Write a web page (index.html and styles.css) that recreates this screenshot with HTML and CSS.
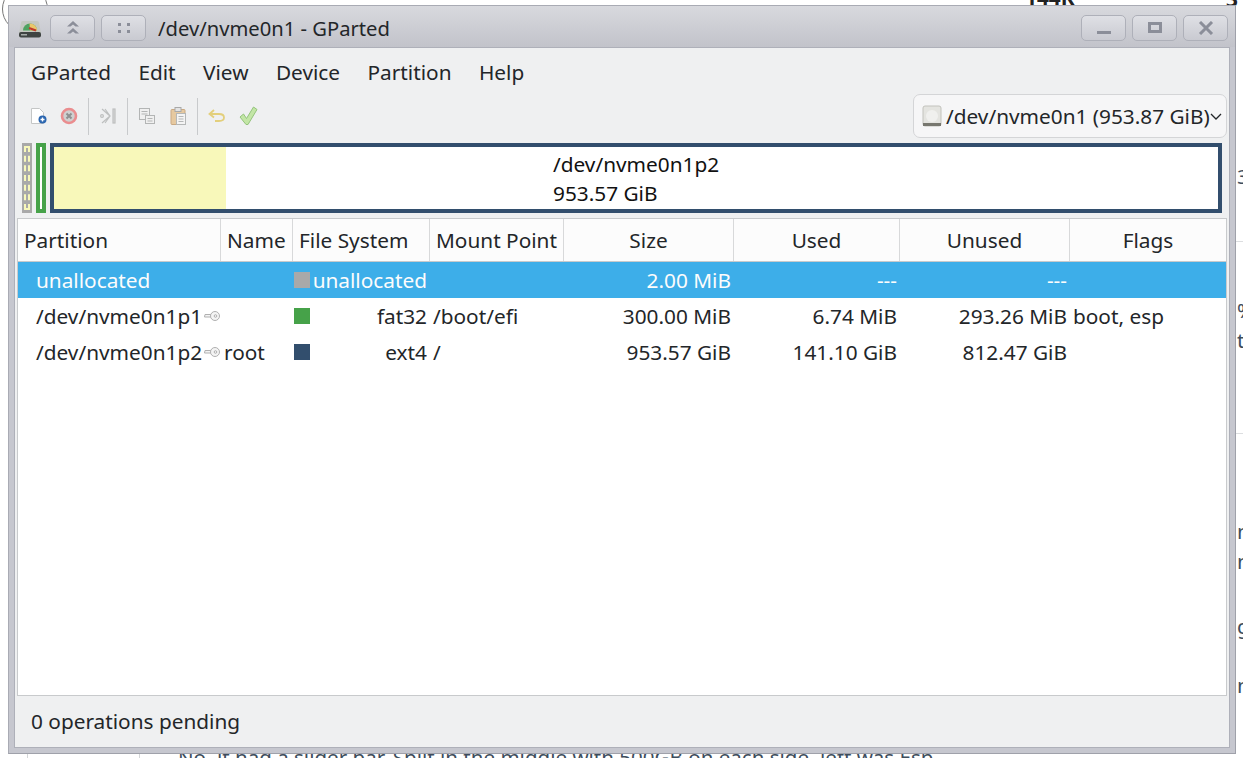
FILE: index.html
```html
<!DOCTYPE html>
<html lang="en">
<head>
  <meta charset="UTF-8">
  <title>/dev/nvme0n1 - GParted</title>
  <link rel="stylesheet" href="styles.css">
</head>
<body>
  <!-- bits of the page behind the window -->
  <div class="behind">
    <div class="behind-circle"></div>
    <i class="hair hair-a"></i>
    <i class="hair hair-b"></i>
    <i class="vert vert-a"></i>
    <i class="vert vert-b"></i>
    <span class="scrap scrap-top">144K</span>
    <span class="scrap scrap-top2">3</span>
    <span class="scrap scrap-r1">3</span>
    <span class="scrap scrap-r2">%</span>
    <span class="scrap scrap-r3">t</span>
    <span class="scrap scrap-r4">ne</span>
    <span class="scrap scrap-r5">ne</span>
    <span class="scrap scrap-r6">g</span>
    <span class="scrap scrap-r7">n</span>
    <span class="scrap scrap-bottom">No, it had a slider bar. Split in the middle with 500GB on each side, left was Esp</span>
  </div>

  <div class="window">
    <header class="titlebar">
      <svg class="app-icon" width="24" height="24" viewBox="0 0 24 24">
        <path d="M3 7q0-2 2-2h14q2 0 2 2l2 10H1z" fill="#c4c8c0"/>
        <path d="M5 14.500a7 7 0 0 1 14 0z" fill="#4fa35f"/>
        <path d="M11.500 7.500a7 7 0 0 1 7.500 7h-7z" fill="#eac76a"/>
        <path d="M11 12l7 2.500" stroke="#c0392b" stroke-width="2"/>
        <rect x="1" y="16" width="22" height="5.500" rx="2" fill="#3f4442"/>
        <rect x="3" y="18" width="6" height="1.500" fill="#a4aaa7"/>
      </svg>
      <button class="tb-btn tb-wide">
        <svg width="14" height="14" viewBox="0 0 14 14" fill="#8b8e99"><path d="M7 0l6 5.500H9.500L7 3.500 4.500 5.500H1zM7 7l6 5.500H9.500L7 10.500 4.500 12.500H1z"/></svg>
      </button>
      <button class="tb-btn tb-wide">
        <svg width="14" height="14" viewBox="0 0 14 14" fill="#8b8e99"><rect x="1" y="2" width="3" height="3"/><rect x="10" y="2" width="3" height="3"/><rect x="1" y="9" width="3" height="3"/><rect x="10" y="9" width="3" height="3"/></svg>
      </button>
      <h1 class="title">/dev/nvme0n1 - GParted</h1>
      <div class="win-controls">
        <button class="tb-btn">
          <svg width="16" height="14" viewBox="0 0 16 14"><rect x="1" y="10" width="14" height="3" fill="#8b8e99"/></svg>
        </button>
        <button class="tb-btn">
          <svg width="16" height="14" viewBox="0 0 16 14" fill="none" stroke="#8b8e99" stroke-width="3"><rect x="2.500" y="2.500" width="11" height="8"/></svg>
        </button>
        <button class="tb-btn">
          <svg width="16" height="14" viewBox="0 0 16 14" fill="none" stroke="#8b8e99" stroke-width="3"><path d="M2 1l12 12M14 1L2 13"/></svg>
        </button>
      </div>
    </header>

    <div class="client">
      <nav class="menubar">
        <span>GParted</span>
        <span>Edit</span>
        <span>View</span>
        <span>Device</span>
        <span>Partition</span>
        <span>Help</span>
      </nav>

      <div class="toolbar">
        <div class="tools">
          <svg class="tool" width="20" height="20" viewBox="0 0 20 20">
            <path d="M3.500 2.500h8l4 4v11h-12z" fill="#fff" stroke="#c4c6c6"/>
            <circle cx="14.500" cy="13.500" r="4" fill="#2b66b0"/>
            <path d="M12.500 13.500h4M14.500 11.500v4" stroke="#fff" stroke-width="1.400"/>
          </svg>
          <svg class="tool" width="20" height="20" viewBox="0 0 20 20">
            <circle cx="10" cy="10" r="7" fill="#cfd0d0" stroke="#ea8d8f" stroke-width="2.600"/>
            <path d="M7.500 7.500l5 5M12.500 7.500l-5 5" stroke="#8d8f90" stroke-width="2"/>
          </svg>
          <i class="tool-sep"></i>
          <svg class="tool" width="20" height="20" viewBox="0 0 20 20" fill="none" stroke="#bdbfbf" stroke-width="1.200">
            <path d="M4 3l8 7-8 7M7 3l5 7-5 7"/>
            <rect x="15" y="3" width="2" height="14" fill="#dcdddd"/>
            <circle cx="4" cy="10" r="1.400"/>
          </svg>
          <i class="tool-sep"></i>
          <svg class="tool" width="20" height="20" viewBox="0 0 20 20" fill="#f0f0f0" stroke="#b3b5b5">
            <rect x="2.500" y="2.500" width="10" height="11"/>
            <rect x="8.500" y="9.500" width="9" height="8"/>
            <path d="M4.500 5.500h6M4.500 8h6M10.500 12.500h5M10.500 15h5" fill="none"/>
          </svg>
          <svg class="tool" width="20" height="20" viewBox="0 0 20 20">
            <rect x="3" y="3.500" width="14" height="15" rx="1" fill="#e6c9a0" stroke="#c9a983"/>
            <rect x="7" y="1.500" width="6" height="4" fill="#e3e3e3" stroke="#a9a9a9"/>
            <rect x="8.500" y="7.500" width="9" height="11" fill="#f4f4f4" stroke="#b5b7b7"/>
            <path d="M10.500 10.500h5M10.500 13h5M10.500 15.500h5" stroke="#b5b7b7"/>
          </svg>
          <i class="tool-sep"></i>
          <svg class="tool" width="20" height="20" viewBox="0 0 20 20" fill="none" stroke="#e3cf7c" stroke-width="1.800">
            <path d="M7 4L2.500 8 7 11.500M3 8h9q5 0 5 3.500T12 15H8"/>
          </svg>
          <svg class="tool" width="20" height="20" viewBox="0 0 20 20">
            <path d="M2 11l3.500-3 3 4.500L15.500 1 19 3.500l-9 15h-2z" fill="#c3e6a6" stroke="#94c47c"/>
          </svg>
        </div>
        <div class="device-combo">
          <svg width="20" height="22" viewBox="0 0 20 22">
            <rect x="1" y="1" width="18" height="20" rx="2" fill="#e4e4e0" stroke="#c2c2bc"/>
            <circle cx="10" cy="11" r="6" fill="#f0f0ee"/>
            <rect x="1" y="18" width="18" height="3" fill="#77776f"/>
          </svg>
          <span>/dev/nvme0n1 (953.87 GiB)</span>
          <svg class="combo-arrow" width="14" height="14" viewBox="0 0 14 14" fill="none" stroke="#232629" stroke-width="1.300"><path d="M2 5l5 5 5-5"/></svg>
        </div>
      </div>

      <div class="disk-map">
        <div class="map-part map-unalloc"><i></i></div>
        <div class="map-part map-fat"><i></i></div>
        <div class="map-part map-root">
          <div class="map-used"></div>
          <div class="map-label">/dev/nvme0n1p2<br>953.57 GiB</div>
        </div>
      </div>

      <section class="table">
        <div class="row head">
          <div class="cell">Partition</div>
          <div class="cell">Name</div>
          <div class="cell">File System</div>
          <div class="cell">Mount Point</div>
          <div class="cell mid">Size</div>
          <div class="cell mid">Used</div>
          <div class="cell mid">Unused</div>
          <div class="cell mid">Flags</div>
        </div>
        <div class="row selected">
          <div class="cell part">unallocated</div>
          <div class="cell name"></div>
          <div class="cell fs"><i class="swatch sw-gray"></i><span>unallocated</span></div>
          <div class="cell mount"></div>
          <div class="cell num">2.00 MiB</div>
          <div class="cell num">---</div>
          <div class="cell num">---</div>
          <div class="cell flags"></div>
        </div>
        <div class="row">
          <div class="cell part">/dev/nvme0n1p1
            <svg class="key" width="17" height="12" viewBox="0 0 17 12" fill="#f4f4f4" stroke="#b0b0b0"><path d="M7 4.500H1L.5 7H7"/><circle cx="11" cy="6" r="4.500"/><circle cx="11.500" cy="6" r="1.300"/></svg>
          </div>
          <div class="cell name"></div>
          <div class="cell fs"><i class="swatch sw-green"></i><span>fat32</span></div>
          <div class="cell mount">/boot/efi</div>
          <div class="cell num">300.00 MiB</div>
          <div class="cell num">6.74 MiB</div>
          <div class="cell num">293.26 MiB</div>
          <div class="cell flags">boot, esp</div>
        </div>
        <div class="row">
          <div class="cell part">/dev/nvme0n1p2
            <svg class="key" width="17" height="12" viewBox="0 0 17 12" fill="#f4f4f4" stroke="#b0b0b0"><path d="M7 4.500H1L.5 7H7"/><circle cx="11" cy="6" r="4.500"/><circle cx="11.500" cy="6" r="1.300"/></svg>
          </div>
          <div class="cell name">root</div>
          <div class="cell fs"><i class="swatch sw-navy"></i><span>ext4</span></div>
          <div class="cell mount">/</div>
          <div class="cell num">953.57 GiB</div>
          <div class="cell num">141.10 GiB</div>
          <div class="cell num">812.47 GiB</div>
          <div class="cell flags"></div>
        </div>
      </section>

      <footer class="statusbar">0 operations pending</footer>
    </div>
  </div>
</body>
</html>
```

FILE: styles.css
```css
* { box-sizing:border-box; }
html, body { height:100%; }
body { margin:0; padding:5px 0 0 8px; background:#fff; font-family:"Noto Sans", sans-serif; font-size:20.8px; color:#232629; overflow:hidden; position:relative; }

/* page behind the window */
.behind { position:absolute; inset:0; overflow:hidden; }
.behind-circle { position:absolute; left:2px; top:-14px; width:46px; height:46px; border:1px solid #777; border-radius:50%; }
.hair { position:absolute; left:1236px; width:7px; height:1px; background:#dcdee0; }
.hair-a { top:241px; }
.hair-b { top:433px; }
.vert { position:absolute; top:750px; width:1px; height:8px; background:#d4d6d8; }
.vert-a { left:27px; }
.vert-b { left:139px; }
.scrap { position:absolute; color:#3d4d5c; line-height:24px; }
.scrap-top { left:1025px; top:-15px; font-weight:700; color:#222; }
.scrap-top2 { left:1226px; top:-13px; font-weight:700; color:#222; }
.scrap-r1 { left:1237px; top:164px; }
.scrap-r2 { left:1237px; top:298px; }
.scrap-r3 { left:1237px; top:328px; }
.scrap-r4 { left:1237px; top:519px; }
.scrap-r5 { left:1237px; top:549px; }
.scrap-r6 { left:1237px; top:614px; }
.scrap-r7 { left:1237px; top:673px; }
.scrap-bottom { left:178px; top:745px; white-space:nowrap; font-size:20.55px; }

/* window frame */
.window { position:relative; width:1228px; height:749px; background:#c6c7cf; border:1px solid #a9abb4; border-right-color:#9fa1aa; border-bottom-color:#9fa1aa; display:flex; flex-direction:column; padding:0 5px 5px 5px; }
.titlebar { height:41px; flex:none; display:flex; align-items:center; margin:0 -5px; padding:2px 7px 0 9px; background:linear-gradient(#d8d9de,#c2c3ca); }
.app-icon { margin-right:8px; }
.tb-btn { width:45px; height:26px; margin:0; padding:0; display:flex; align-items:center; justify-content:center; background:linear-gradient(#dfe0e5,#c9cad1); border:1px solid #aeb0b9; border-radius:5px; }
.tb-wide { margin-right:6px; }
.title { margin:0 0 0 6px; font-weight:400; font-size:20.2px; }
.win-controls { margin-left:auto; display:flex; gap:6px; }

.client { flex:1; display:flex; flex-direction:column; background:#eff0f1; border:1px solid #aeb0b9; min-height:0; padding:0 2px; }

.menubar { height:46px; flex:none; display:flex; align-items:center; gap:27.4px; padding:2px 14px 0; }

.toolbar { height:44px; flex:none; display:flex; align-items:center; justify-content:space-between; padding:0 0 0 11px; }
.tools { display:flex; align-items:center; gap:9px; }
.tool + .tool { margin-left:2px; }
.tool-sep { width:1px; height:37px; background:#c8cacc; }
.device-combo { width:314px; height:44px; display:flex; align-items:center; gap:4px; padding:0 3px 0 8px; background:#f6f6f7; border:1px solid #d4d5d7; border-radius:7px; white-space:nowrap; }
.combo-arrow { flex:none; margin-left:-5px; }

.disk-map { height:70px; flex:none; margin-top:5px; display:flex; gap:4px; padding:0 5px 0 5px; }
.map-part { height:70px; position:relative; }
.map-unalloc { width:10px; background:#a9a9a9; padding:3px 2px; }
.map-unalloc i { display:block; height:100%; border:2px dashed #f8f8ba; }
.map-fat { width:10px; background:#46a249; padding:4px 4px; }
.map-fat i { display:block; height:100%; background:#fff; }
.map-root { flex:1; display:flex; background:#fff; border:4px solid #324e6d; }
.map-used { width:172px; background:#f8f8ba; }
.map-label { position:absolute; left:499px; top:3px; line-height:29px; color:#111; }

.table { flex:1; min-height:0; margin-top:5px; background:#fff; border:1px solid #c8cacc; }
.row { display:grid; grid-template-columns:203px 72px 137px 134px 170px 166px 170px 1fr; height:36px; align-items:center; }
.cell { white-space:nowrap; min-width:0; padding-right:2px; }
.head { height:43px; background:#fcfcfc; border-bottom:1px solid #c8cacc; }
.head .cell { height:100%; display:flex; align-items:center; padding-left:6px; border-right:1px solid #d8d9da; }
.head .cell:last-child { border-right:0; }
.head .mid { justify-content:center; padding:0; }
.selected { background:#3daee9; color:#fcfcfc; }
.part { padding-left:18px; display:flex; align-items:center; gap:2px; }
.key { flex:none; }
.name { padding-left:4px; margin-left:-1px; }
.fs { display:flex; align-items:center; justify-content:space-between; padding:0 3px 0 1px; overflow:visible; }
.swatch { flex:none; width:16px; height:16px; }
.sw-gray { background:#a9a9a9; }
.sw-green { background:#46a249; }
.sw-navy { background:#324e6d; }
.mount { padding-left:3px; }
.num { text-align:right; padding-right:3px; }
.flags { padding-left:3px; }

.statusbar { height:51px; flex:none; display:flex; align-items:center; padding:0 0 2px 14px; }
```
